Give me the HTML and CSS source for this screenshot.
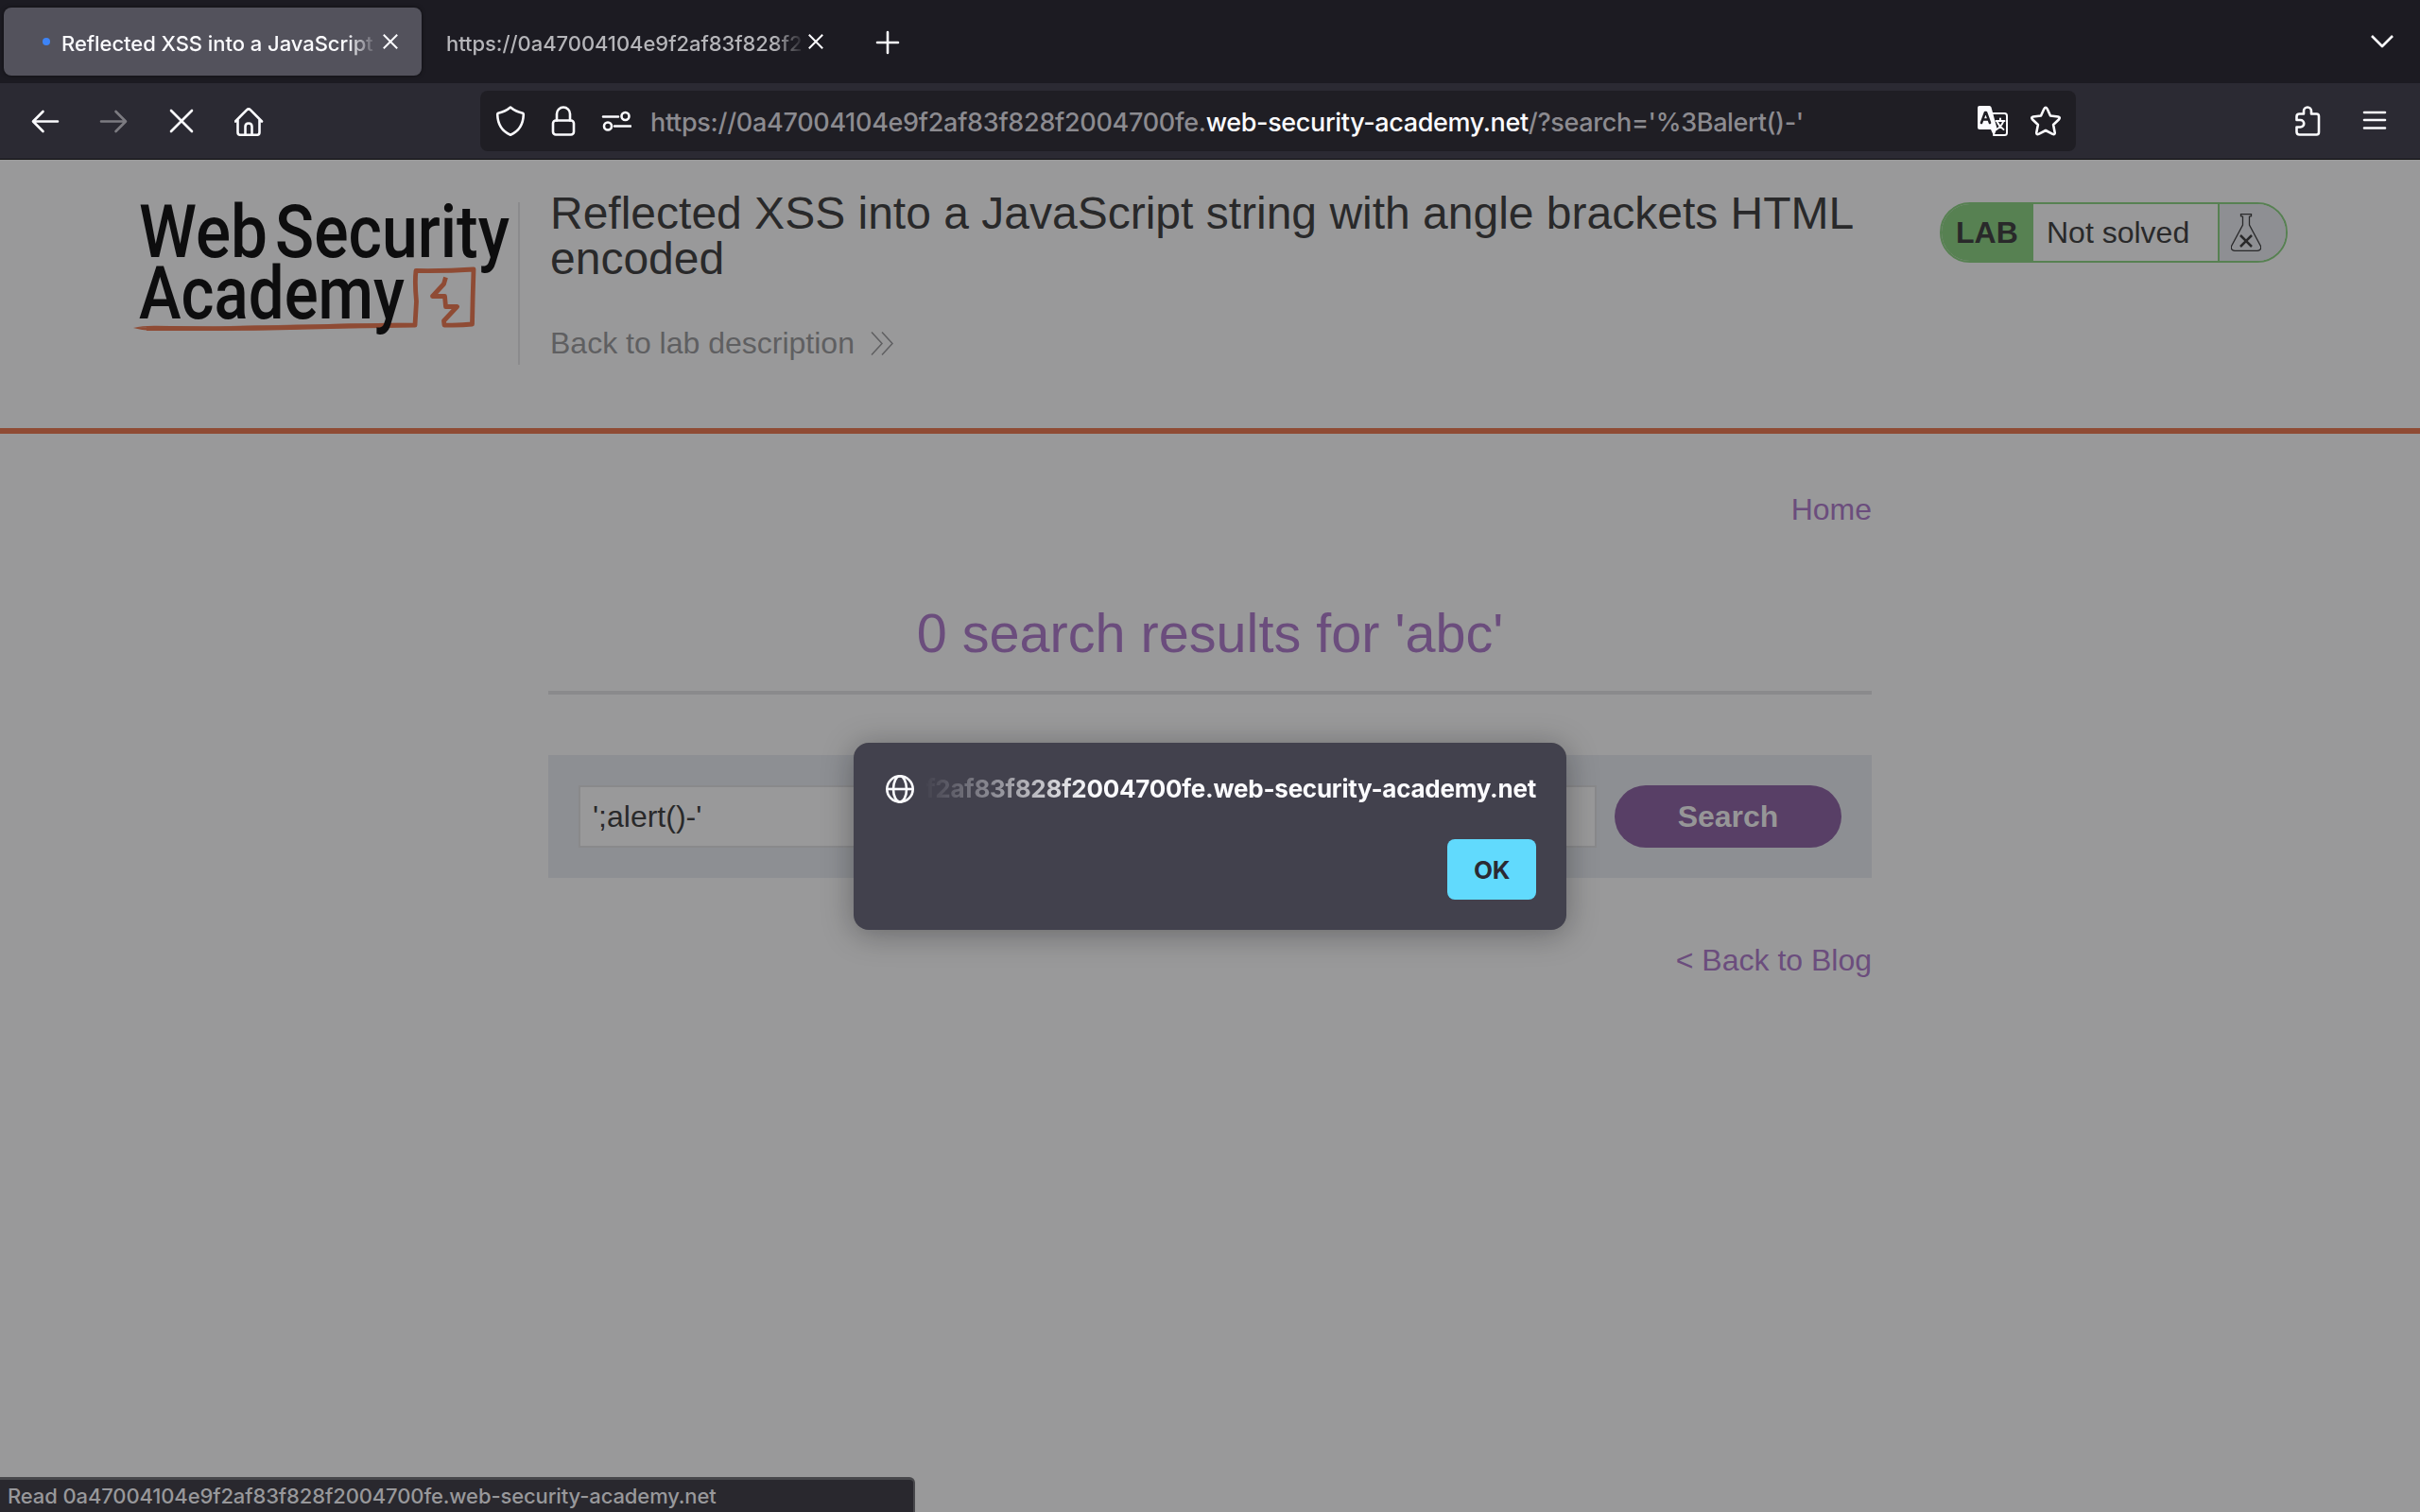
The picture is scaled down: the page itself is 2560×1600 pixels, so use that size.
FILE: index.html
```html
<!DOCTYPE html>
<html lang="en">
<head>
<meta charset="utf-8">
<title>Reflected XSS into a JavaScript string with angle brackets HTML encoded</title>
<link rel="stylesheet" href="styles.css">
</head>
<body>
<div class="tabs">
  <div class="tab tab-active">
    <span class="dot"></span>
    <span class="tab-label">Reflected XSS into a JavaScript</span>
    <svg class="close" viewBox="0 0 16 16"><path d="M.8.8l14.4 14.4M15.2.8L.8 15.2"/></svg>
  </div>
  <div class="tab tab-idle">
    <span class="tab-label">https://0a47004104e9f2af83f828f2</span>
    <svg class="close" viewBox="0 0 16 16"><path d="M.8.8l14.4 14.4M15.2.8L.8 15.2"/></svg>
  </div>
  <svg class="icon plus" viewBox="0 0 32 32"><path d="M5 16h22M16 5v22"/></svg>
  <svg class="icon chevron" viewBox="0 0 32 32"><path d="M5 10l11 11 11-11"/></svg>
</div>
<div class="nav">
  <svg class="icon" viewBox="0 0 32 32"><path d="M29 16.500H4M13.500 6L3 16.500l10.500 10.500"/></svg>
  <svg class="icon disabled" viewBox="0 0 32 32"><path d="M3 16.500h25M18.500 6l10.500 10.500-10.500 10.500"/></svg>
  <svg class="icon" viewBox="0 0 32 32"><path d="M5 5l22 22M27 5L5 27"/></svg>
  <svg class="icon" viewBox="0 0 32 32"><path d="M1 16.500L13 4.300q2-2 4 0L29 16.500M3.500 14.500V28q0 2.800 2.800 2.800h17.400q2.800 0 2.800-2.800V14.500M11.500 30.500V22q0-3.500 3.500-3.500t3.500 3.500v8.500"/></svg>
  <div class="urlbar">
    <svg class="icon" viewBox="0 0 32 32"><path d="M16 1.500q6 5 13 6.200.8.300.8 1.300c-.3 11-5 18-13.800 21.700C7.200 27 2.500 20 2.200 9q0-1 .8-1.300 7-1.200 13-6.200z"/></svg>
    <svg class="icon" viewBox="0 0 32 32"><rect x="5" y="15.500" width="22" height="15" rx="3"/><path d="M9 15.500V8.500a7 7 0 0 1 14 0v7"/></svg>
    <svg class="icon" viewBox="0 0 32 32"><path d="M2 11.500h16M14 21.500h17"/><circle cx="25.500" cy="11" r="4"/><circle cx="7" cy="21.500" r="4"/></svg>
    <div class="url">https://0a47004104e9f2af83f828f2004700fe.<span class="host">web-security-academy.net</span><span class="query">/?search='%3Balert()-'</span></div>
    <svg class="icon translate" viewBox="0 0 32 32"><path class="solid" d="M2 0h10.500q1.500 0 2 1.600L20.500 24l-3.300 8L14 25H2q-2 0-2-2V2q0-2 2-2z"/><path class="hole" d="M4 18L8 7h1l4 11M5.500 14.500h6"/><path class="thin" d="M16 8h12.500q2.500 0 2.500 2.500v18q0 2.500-2.500 2.500H17M19.500 16h9M24 13.500V16M27 17q-2 5-7 8M21 17.500q2 4.500 6.500 7.500"/></svg>
    <svg class="icon" viewBox="0 0 32 32"><path d="M14.300 3.300q1.700-3 3.400 0l3.300 7.200 8.200 1q2.600.6.900 2.700l-6 5.800 1.600 8.200q.2 2.800-2.300 1.700L16 26l-7.400 3.900q-2.500 1.100-2.300-1.700L7.900 20l-6-5.800q-1.700-2.100.9-2.700l8.200-1z"/></svg>
  </div>
  <svg class="icon puzzle" viewBox="0 0 32 32"><path d="M5.500 15V11.500q0-3 3-3H13V5.500a4 4 0 0 1 8 0v3h5.500q2.500 0 2.500 2.500v17q0 2.500-2.500 2.500h-18q-3 0-3-3V22.500h4a3.700 3.700 0 0 0 0-7.500z"/></svg>
  <svg class="icon" viewBox="0 0 32 32"><path d="M5 7h22M5 15h22M5 23.500h22"/></svg>
</div>
<header class="lab-header">
  <svg class="logo" viewBox="0 0 418 210">
    <path class="mark" d="M11 157q10-2.500 24-2.300 60 1 120 0 60-1.500 95-2l59-1.500M11 157q10 3 24 2.500 60 .5 120-.5 60-2 95-2l59-1.500"/>
    <path class="mark-line" d="M25 157.500q60 .5 130-.5 90-2.500 154-3l1.500-25q-2-20-.5-32.500 32 .5 61-1.500-1 30-1.500 58-12 1.500-29.500 1l-.5-4.500 14-15h-12l-1-11h-13l12-13 2-7"/>
    <text class="logo-text" x="17" y="81.500" textLength="136" lengthAdjust="spacingAndGlyphs">Web</text>
    <text class="logo-text" x="161" y="81.500" textLength="248" lengthAdjust="spacingAndGlyphs">Security</text>
    <text class="logo-text" x="17" y="146.500" textLength="281" lengthAdjust="spacingAndGlyphs">Academy</text>
  </svg>
  <div class="title-block">
    <h1 class="title">Reflected XSS into a JavaScript string with angle brackets HTML encoded</h1>
    <a class="back-link">Back to lab description<svg class="arrows" viewBox="0 0 24 25"><path d="M1 .5l11 12-11 12M12 .5l11 12-11 12"/></svg></a>
  </div>
  <div class="badge">
    <div class="badge-lab">LAB</div>
    <div class="badge-state">Not solved</div>
    <div class="badge-icon"><svg class="flask" viewBox="0 0 32 40"><path d="M10.500.7h11v2l-2 .5V12l12 22.500q1 4.500-3.500 4.800H4q-4.500-.3-3.500-4.800L12.500 12V3.200l-2-.5z"/><path class="cross" d="M10 23l12 12M22 23L10 35"/></svg></div>
  </div>
</header>
<main class="content">
  <a class="home">Home</a>
  <h2 class="results">0 search results for 'abc'</h2>
  <form class="search">
    <div class="field">';alert()-'</div>
    <div class="button">Search</div>
  </form>
  <a class="blog">&lt; Back to Blog</a>
</main>
<div class="dialog">
  <div class="dialog-head">
    <svg class="globe" viewBox="0 0 30 30"><circle cx="15" cy="15" r="13.700"/><ellipse cx="15" cy="15" rx="7" ry="13.700"/><path d="M1 15h28"/></svg>
    <div class="origin">0a47004104e9f2af83f828f2004700fe.web-security-academy.net</div>
  </div>
  <div class="ok">OK</div>
</div>
<div class="status">Read 0a47004104e9f2af83f828f2004700fe.web-security-academy.net</div>
</body>
</html>
```
FILE: styles.css
```css
* { box-sizing: border-box; }
body {
  margin: 0;
  width: 2560px;
  height: 1600px;
  position: relative;
  overflow: hidden;
  background: #99999a;
  font-family: "Liberation Sans", Arial, sans-serif;
  font-size: 32px;
  color: #29292a;
}
svg { display: block; flex: none; fill: none; stroke: #fbfbfe; stroke-width: 2.6; }

.tabs {
  display: flex;
  align-items: center;
  height: 88px;
  padding-left: 4px;
  background: #1c1b22;
  font-family: Inter, "Noto Sans", sans-serif;
  font-size: 22px;
  font-weight: 500;
}
.tab { display: flex; align-items: center; height: 72px; color: #fbfbfe; }
.tab-active {
  width: 442px;
  padding-left: 41px;
  border-radius: 8px;
  background: #53525c;
  box-shadow: 0 0 4px rgba(0, 0, 0, .5);
}
.tab-idle { width: 455px; padding-left: 26px; color: #b5b5b9; }
.dot { width: 8px; height: 8px; margin-right: 12px; border-radius: 50%; background: #3d84f7; }
.tab-label {
  width: 334px;
  line-height: 30px;
  padding-top: 4px;
  letter-spacing: -.05px;
  white-space: nowrap;
  overflow: hidden;
  mask-image: linear-gradient(to left, transparent 0, #000 32px);
}
.tab-idle .tab-label { width: 379px; }
.close { width: 16px; height: 16px; margin-left: 6px; stroke-width: 2; }
.tab-idle .close { margin-left: 4px; }
.icon { width: 32px; height: 32px; stroke-linejoin: round; stroke-linecap: round; }
.plus { margin-left: 22px; margin-top: 2px; }
.chevron { margin-left: auto; margin-right: 24px; stroke-linecap: butt; }

.nav {
  display: flex;
  align-items: center;
  gap: 40px;
  height: 81px;
  padding: 0 32px;
  background: #2b2a33;
  border-bottom: 1px solid #0c0c0d;
}
.disabled { stroke: #7c7b81; }
.urlbar {
  display: flex;
  align-items: center;
  gap: 24px;
  width: 1688px;
  height: 64px;
  margin-left: 188px;
  padding: 0 16px;
  border-radius: 8px;
  background: #1f1e24;
}
.url {
  flex: 1;
  margin-left: -4px;
  padding-top: 2px;
  font-family: Inter, "Noto Sans", sans-serif;
  font-size: 27px;
  font-weight: 450;
  letter-spacing: -.3px;
  white-space: nowrap;
  color: #8c8b90;
}
.host { color: #fbfbfe; letter-spacing: -.37px; }
.query { letter-spacing: -.35px; }
.solid { fill: #fbfbfe; stroke: none; }
.hole { stroke: #1f1e24; }
.thin { stroke-width: 2; }
.puzzle { margin-left: auto; }

.lab-header {
  display: flex;
  align-items: flex-start;
  height: 290px;
  padding: 21px 140px 0 130px;
  border-bottom: 6px solid #8f4b34;
}
.logo { width: 418px; height: 210px; overflow: visible; }
.logo-text {
  font-family: Roboto, sans-serif;
  font-size: 77px;
  font-weight: 500;
  fill: #0d0d0e;
  stroke: none;
}
.mark { fill: #8f4b34; stroke: none; }
.mark-line { stroke: #8f4b34; stroke-width: 4.8; stroke-linejoin: round; }
.title-block {
  width: 1480px;
  height: 172px;
  margin-top: 24px;
  padding-left: 32px;
  border-left: 2px solid #8b8b8d;
}
.title { margin: -12px 0 0; font-size: 48px; line-height: 48px; font-weight: 400; }
.back-link { display: flex; align-items: center; margin-top: 45px; line-height: 40px; color: #5f5f61; }
.arrows { width: 24px; height: 25px; margin-left: 17px; stroke: #5f5f61; stroke-width: 1.5; }
.badge {
  display: flex;
  width: 368px;
  height: 64px;
  margin: 24px 0 0 auto;
  border: 2px solid #578152;
  border-radius: 32px;
  overflow: hidden;
  line-height: 61px;
}
.badge-lab { width: 97px; padding-left: 15px; background: #578152; font-weight: 700; }
.badge-state { flex: 1; padding-left: 14px; }
.badge-icon { width: 72px; padding: 10px 0 0 12px; border-left: 2px solid #578152; background: #8e8f93; }
.flask { width: 32px; height: 40px; stroke: #29292a; stroke-width: 1.3; }
.cross { stroke-width: 2.5; }

.content { display: flex; flex-direction: column; width: 1400px; margin: 0 auto; padding-top: 60px; }
.home, .blog { align-self: flex-end; line-height: 40px; color: #6b4d7d; }
.results {
  height: 176px;
  margin: 0;
  padding-top: 78px;
  border-bottom: 4px solid #8a8a8c;
  font-size: 57.6px;
  font-weight: 400;
  line-height: 66px;
  text-align: center;
  color: #6b4d7d;
}
.search {
  display: flex;
  gap: 19px;
  height: 130px;
  margin: 64px 0 0;
  padding: 32px;
  background: #8d8f93;
}
.field { flex: 1; height: 66px; padding-left: 13px; border: 2px solid #89898b; background: #99999a; line-height: 63px; }
.button {
  width: 240px;
  height: 66px;
  border-radius: 33px;
  background: #583f66;
  color: #969697;
  font-weight: 700;
  line-height: 66px;
  text-align: center;
}
.blog { margin-top: 67px; }

.dialog {
  position: absolute;
  left: 903px;
  top: 786px;
  width: 754px;
  height: 198px;
  padding: 32px;
  border-radius: 16px;
  background: #42414d;
  box-shadow: 0 4px 32px rgba(12, 12, 13, .35);
  font-family: Inter, "Noto Sans", sans-serif;
  font-size: 26px;
  font-weight: 700;
  letter-spacing: -.25px;
  color: #fbfbfe;
}
.dialog-head { display: flex; align-items: center; height: 34px; padding-left: 2px; }
.globe { width: 30px; height: 30px; }
.origin {
  display: flex;
  justify-content: flex-end;
  flex: 1;
  margin-left: 10px;
  overflow: hidden;
  line-height: 34px;
  white-space: nowrap;
  mask-image: linear-gradient(to right, transparent, #000 180px);
}
.ok {
  width: 94px;
  height: 64px;
  margin: 36px 0 0 auto;
  border-radius: 8px;
  background: #61dafd;
  color: #2b2a33;
  line-height: 65px;
  text-align: center;
}
.status {
  position: absolute;
  left: 0;
  bottom: 0;
  width: 968px;
  height: 37px;
  padding-left: 8px;
  border: 2px solid #47474b;
  border-width: 3px 2px 0 0;
  border-top-right-radius: 6px;
  background: #29282e;
  color: #98989b;
  font-family: Inter, "Noto Sans", sans-serif;
  font-size: 22px;
  font-weight: 500;
  letter-spacing: -.12px;
  line-height: 34px;
  white-space: nowrap;
}
```
